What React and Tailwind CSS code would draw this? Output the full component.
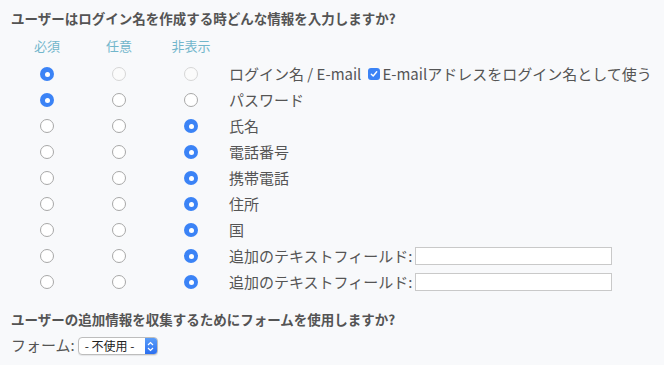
import React from "react";

const rows = [
  { label: "ログイン名 / E-mail", sel: 0, disabled: true, extra: "checkbox" },
  { label: "パスワード", sel: 0 },
  { label: "氏名", sel: 2 },
  { label: "電話番号", sel: 2 },
  { label: "携帯電話", sel: 2 },
  { label: "住所", sel: 2 },
  { label: "国", sel: 2 },
  { label: "追加のテキストフィールド:", sel: 2, extra: "input" },
  { label: "追加のテキストフィールド:", sel: 2, extra: "input" },
];

function Radio({ checked, disabled }) {
  if (checked) {
    return (
      <span className="flex h-[14px] w-[14px] items-center justify-center rounded-full bg-[#3b83f6]">
        <span className="h-[5px] w-[5px] rounded-full bg-white" />
      </span>
    );
  }
  return (
    <span
      className={
        disabled
          ? "h-[14px] w-[14px] rounded-full border border-[#d6d6d6] bg-[#fbfbfb]"
          : "h-[14px] w-[14px] rounded-full border border-[#a8a8a8] bg-white"
      }
    />
  );
}

export default function App() {
  return (
    <div
      className="h-[365px] w-[664px] bg-[#f8f9fb] pl-[11px] pt-[8px] text-[#555]"
      style={{ fontFamily: '"Noto Sans CJK JP", "Noto Sans", sans-serif' }}
    >
      <div className="h-[20px] text-[13.5px] font-bold leading-[20px] text-[#545454]">
        ユーザーはログイン名を作成する時どんな情報を入力しますか?
      </div>
      <div className="mt-[8px] grid h-[20px] grid-cols-[72px_72px_72px] text-[13px] leading-[20px] text-[#72b6cb]">
        <div className="text-center">必須</div>
        <div className="text-center">任意</div>
        <div className="text-center">非表示</div>
      </div>
      <div className="mt-[5px] flex flex-col">
        {rows.map((r, i) => (
          <div key={i} className="grid h-[26px] grid-cols-[72px_72px_72px_1fr] items-center">
            {[0, 1, 2].map((c) => (
              <div key={c} className="flex justify-center">
                <Radio checked={r.sel === c} disabled={r.disabled && c !== r.sel} />
              </div>
            ))}
            <div className="flex items-center pl-[2px] text-[15px] leading-[20px] text-[#555]">
              <span>{r.label}</span>
              {r.extra === "checkbox" && (
                <span className="ml-[7px] flex items-center">
                  <span className="flex h-[12px] w-[12px] items-center justify-center rounded-[3px] bg-[#3b83f6]">
                    <svg width="8" height="8" viewBox="0 0 8 8">
                      <path d="M1.3 4.2 L3.2 6 L6.7 1.8" fill="none" stroke="white" strokeWidth="1.4" strokeLinecap="round" strokeLinejoin="round" />
                    </svg>
                  </span>
                  <span className="ml-[2px]">E-mailアドレスをログイン名として使う</span>
                </span>
              )}
              {r.extra === "input" && (
                <span className="ml-[3px] h-[18px] w-[197px] border border-[#c9c9c9] bg-white" />
              )}
            </div>
          </div>
        ))}
      </div>
      <div className="mt-[14px] h-[20px] text-[13.5px] font-bold leading-[20px] text-[#545454]">
        ユーザーの追加情報を収集するためにフォームを使用しますか?
      </div>
      <div className="mt-[5px] flex h-[22px] items-center text-[15px]">
        <span>フォーム:</span>
        <span className="ml-[3px] mt-[2px] flex h-[18px] w-[80px] items-center overflow-hidden rounded-[4px] border border-[#bdbdbd] bg-white shadow-[0_1px_1px_rgba(0,0,0,0.08)]">
          <span className="flex-1 pl-[6px] text-[12px] leading-[16px] text-[#222]">- 不使用 -</span>
          <span className="flex h-full w-[12px] items-center justify-center bg-gradient-to-b from-[#5a9cf8] to-[#2c6ff0]">
            <svg width="7" height="11" viewBox="0 0 7 11">
              <path d="M1 4 L3.5 1.5 L6 4 M1 7 L3.5 9.5 L6 7" fill="none" stroke="white" strokeWidth="1.2" />
            </svg>
          </span>
        </span>
      </div>
    </div>
  );
}
